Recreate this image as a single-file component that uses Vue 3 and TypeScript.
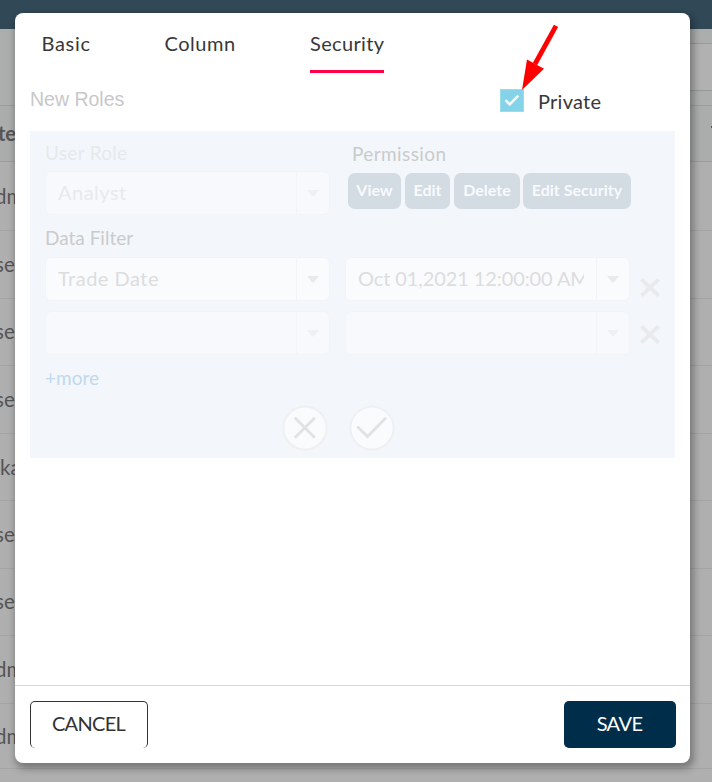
<script setup lang="ts">
interface BackRow { h: number; text: string; kind: string }
const backRows: BackRow[] = [
  { h: 69, text: 'dm', kind: 'adm' }, { h: 68, text: 'se', kind: 'usr' }, { h: 67, text: 'se', kind: 'usr' },
  { h: 68, text: 'se', kind: 'usr' }, { h: 67, text: 'ka', kind: 'aka' }, { h: 68, text: 'se', kind: 'usr' },
  { h: 67, text: 'se', kind: 'usr' }, { h: 68, text: 'dm', kind: 'adm' }, { h: 65, text: 'dm', kind: 'adm' },
]
const permissions = [
  { label: 'View', cls: 'p-view' }, { label: 'Edit', cls: 'p-edit' },
  { label: 'Delete', cls: 'p-delete' }, { label: 'Edit Security', cls: 'p-security' },
]
const filters = [
  { field: 'Trade Date', value: 'Oct 01,2021 12:00:00 AM', empty: false },
  { field: '', value: '', empty: true },
]
</script>

<template>
  <div class="page">
    <div class="backdrop">
      <div class="topbar"></div>
      <div class="toolbar"><div class="field"></div></div>
      <div class="thead"><span class="th">te</span><span class="th-end"></span></div>
      <div v-for="(r, i) in backRows" :key="i" class="brow" :style="{ height: r.h + 'px' }"><span class="cell" :class="r.kind">{{ r.text }}</span></div>
    </div>
    <section class="modal">
      <nav class="tabs">
        <span class="tab basic">Basic</span>
        <span class="tab column">Column</span>
        <span class="tab security active">Security</span>
      </nav>
      <div class="subhead">
        <span class="new-roles">New Roles</span>
        <label class="private">
          <svg class="check" width="24" height="23" viewBox="0 0 24 23"><rect x=".5" y=".5" width="23" height="22" fill="#84d3e8" stroke="#9bdcea" /><path d="M5.5 11.2l4.2 4.3 8.6-8.8" fill="none" stroke="#f2fbfd" stroke-width="2.6" /></svg>
          <span class="private-text">Private</span>
        </label>
      </div>
      <div class="panel">
        <div class="labels"><span class="lb user-role">User Role</span><span class="lb permission">Permission</span></div>
        <div class="role-row">
          <div class="select faint"><span class="val name">Analyst</span><span class="drop"><svg width="12" height="7" viewBox="0 0 12 7"><path d="M0 0h12L7 6.2Q6 7 5 6.2z" /></svg></span></div>
          <div class="perms"><span v-for="p in permissions" :key="p.label" class="perm" :class="p.cls">{{ p.label }}</span></div>
        </div>
        <div class="lb data-filter">Data Filter</div>
        <div v-for="(f, i) in filters" :key="i" class="filter-row">
          <div class="select" :class="{ faint: f.empty }"><span class="val name">{{ f.field }}</span><span class="drop"><svg width="12" height="7" viewBox="0 0 12 7"><path d="M0 0h12L7 6.2Q6 7 5 6.2z" /></svg></span></div>
          <div class="select" :class="{ faint: f.empty }"><span class="val date">{{ f.value }}</span><span class="drop"><svg width="12" height="7" viewBox="0 0 12 7"><path d="M0 0h12L7 6.2Q6 7 5 6.2z" /></svg></span></div>
          <svg class="remove" width="20" height="19" viewBox="0 0 20 19"><path d="M1.3 1.3l17.4 16.4M18.7 1.3L1.3 17.7" stroke="#e9eaeb" stroke-width="4" /></svg>
        </div>
        <div class="more">+more</div>
        <div class="actions">
          <svg width="46" height="46" viewBox="0 0 46 46"><circle cx="23" cy="23" r="21.6" fill="#fafbfd" stroke="#eef0f1" stroke-width="2" /><path d="M12.8 12.8l20 20M32.8 12.8l-20 20" fill="none" stroke="#e0e2e4" stroke-width="2.8" /></svg>
          <svg width="46" height="46" viewBox="0 0 46 46"><circle cx="23" cy="23" r="21.6" fill="#fafbfd" stroke="#eef0f1" stroke-width="2" /><path d="M8.3 21.5l10.2 10L37 12.7" fill="none" stroke="#e0e2e4" stroke-width="2.8" /></svg>
        </div>
      </div>
      <footer class="footer">
        <button class="btn cancel">CANCEL</button>
        <button class="btn save">SAVE</button>
      </footer>
    </section>
    <svg class="arrow" width="40" height="70" viewBox="0 0 40 70"><path d="M34 5.8L13 44" stroke="#f00" stroke-width="4.8" /><path d="M0 70L5 39.5L22 48.8Z" fill="#f00" /></svg>
  </div>
</template>

<style>
body { margin: 0; overflow: hidden; }
</style>

<style scoped>
* { box-sizing: border-box; }
.page { position: relative; width: 712px; height: 782px; padding: 13px 22px 19px 15px; overflow: hidden; font-family: Lato, "Open Sans", sans-serif; font-size: 20px; color: #383838; background: #afafaf; }
.backdrop { position: absolute; inset: 0; }
.topbar { height: 29px; background: #314857; }
.toolbar { height: 77px; background: #abaead; border-bottom: 1px solid #9b9e9d; padding-top: 14px; }
.field { height: 48px; border-top: 1px solid #969999; border-bottom: 1px solid #969999; margin-left: 600px; background: #b1b1b1; }
.thead { height: 56px; background: #aaadac; border-bottom: 1px solid #9b9e9d; display: flex; justify-content: space-between; align-items: center; font-weight: 700; color: #555; }
.th { margin-left: -2px; padding-bottom: 1px; }
.th-end { width: 1px; height: 2px; margin-bottom: 13px; background: #555; }
.brow { border-bottom: 1px solid #a4a4a4; display: flex; align-items: center; color: #555; }
.cell { padding-bottom: 2px; font-size: 20.5px; }
.adm { margin-left: -5px; padding-bottom: 1px; }
.usr { margin-left: -5px; }
.aka { margin-left: 0; padding-bottom: 1px; }
.modal { position: relative; display: flex; flex-direction: column; width: 675px; height: 750px; border-radius: 8px; background: #fff; box-shadow: 2px 4px 7px 2px rgba(0,0,0,.3); }
.tabs { display: flex; height: 60px; padding-left: 26.5px; line-height: 24px; letter-spacing: .45px; }
.tab { padding-top: 18px; height: 60px; }
.basic { width: 123px; letter-spacing: .7px; }
.column { width: 145.5px; letter-spacing: .55px; }
.security { width: 74px; white-space: nowrap; letter-spacing: .35px; }
.active { border-bottom: 3px solid #ff0046; }
.subhead { display: flex; height: 58px; padding: 14px 0 0 15px; }
.new-roles { width: 470px; font-family: "Liberation Sans", sans-serif; font-size: 19.5px; line-height: 24px; color: #c8c8c8; }
.private { display: flex; gap: 14px; }
.check { margin-top: 2px; }
.private-text { line-height: 24px; padding-top: 2px; letter-spacing: .25px; }
.panel { width: 645px; height: 327px; margin-left: 15px; padding: 11px 0 0 15px; background: #f3f7fc; }
.lb { font-size: 19px; line-height: 24px; color: #cacbcb; }
.labels { display: flex; height: 29px; }
.user-role { width: 307px; color: #e6e9ec; letter-spacing: .3px; margin-top: -1px; }
.permission { letter-spacing: .4px; }
.role-row { display: flex; gap: 18px; }
.select { display: flex; width: 285px; height: 44px; border: 1px solid #f2f4f7; border-radius: 6px; background: #fafbfd; overflow: hidden; }
.val { flex: 1; min-width: 0; padding-left: 12px; margin-right: 12px; overflow: hidden; white-space: nowrap; font-size: 20px; line-height: 40px; color: #dcddde; }
.name { letter-spacing: .5px; }
.date { letter-spacing: -.1px; }
.drop { width: 33px; border-left: 1px solid #f2f4f7; display: flex; align-items: center; justify-content: center; }
.drop svg { fill: #e9eaec; margin-top: 1px; }
.faint { background: #f7f9fd; }
.faint .val { color: #e7e9ec; }
.faint .drop svg { fill: #eef0f3; }
.perms { display: flex; gap: 4px; padding-top: 2px; }
.perm { height: 36px; border-radius: 7px; background: #d3dbe3; color: #f8fafd; font-size: 16px; font-weight: 700; line-height: 34px; text-align: center; white-space: nowrap; }
.p-view { width: 53px; } .p-edit { width: 45px; } .p-delete { width: 66px; margin-right: -1px; } .p-security { width: 108px; }
.data-filter { margin-top: 11px; height: 31px; }
.filter-row { display: flex; height: 54px; }
.filter-row .select + .select { margin-left: 15px; }
.remove { margin: 21px 0 0 10px; }
.filter-row:nth-child(5) .remove { margin-top: 14px; }
.more { height: 39px; line-height: 24px; margin-top: 1px; font-size: 19px; color: #bfd9ed; }
.actions { display: flex; gap: 21px; margin-left: 236.5px; }
.footer { margin-top: auto; height: 78px; border-top: 1px solid #d7d9dd; display: flex; justify-content: space-between; padding: 15px 14px 0 15px; }
.btn { height: 47px; border-radius: 5px; font-family: inherit; font-size: 20px; line-height: 44px; padding: 0 1px 3px 0; }
.cancel { width: 118px; border: 1px solid #333; border-bottom: 0; color: #333; background: #fff; letter-spacing: -.7px; line-height: 42px; padding-bottom: 4px; }
.save { width: 112px; border: 0; color: #fff; background: #002d49; letter-spacing: -.6px; }
.arrow { position: absolute; left: 522px; top: 20px; }
</style>
